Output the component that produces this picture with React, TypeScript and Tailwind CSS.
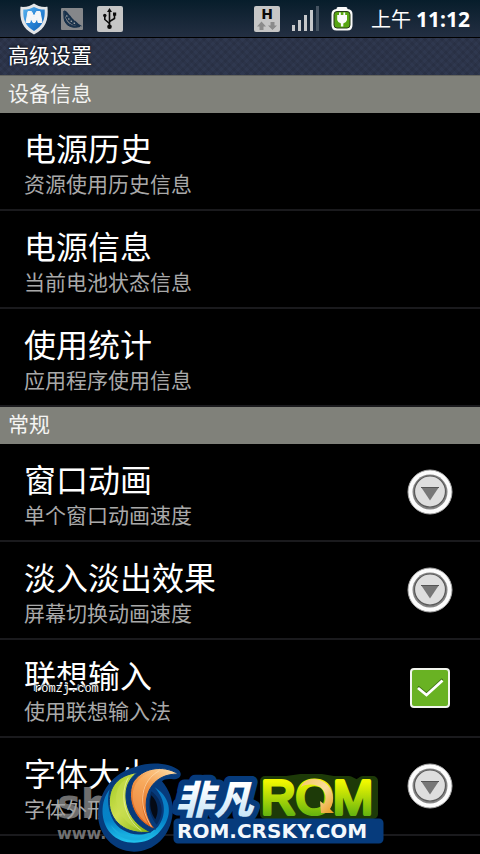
import { useState } from 'react'

interface Item {
    id: string
    title: string
    summary: string
    control?: 'dialog' | 'checkbox'
}

const DEVICE_INFO: Item[] = [
    { id: 'power-history', title: '电源历史', summary: '资源使用历史信息' },
    { id: 'power-info', title: '电源信息', summary: '当前电池状态信息' },
    { id: 'usage', title: '使用统计', summary: '应用程序使用信息' },
]

const GENERAL: Item[] = [
    { id: 'window-animation', title: '窗口动画', summary: '单个窗口动画速度', control: 'dialog' },
    { id: 'fade', title: '淡入淡出效果', summary: '屏幕切换动画速度', control: 'dialog' },
    { id: 'predictive', title: '联想输入', summary: '使用联想输入法', control: 'checkbox' },
    { id: 'font-size', title: '字体大小', summary: '字体外形', control: 'dialog' },
]

function ShieldIcon() {
    return (
        <svg width="30" height="32" viewBox="0 0 30 32">
            <defs>
                <linearGradient id="shield-blue" x1="0" y1="0" x2="1" y2="1">
                    <stop offset="0" stopColor="#5bb4ee" />
                    <stop offset="0.5" stopColor="#2a86d8" />
                    <stop offset="1" stopColor="#1161b4" />
                </linearGradient>
            </defs>
            <path d="M15 0.5C18 2.8 23 4.4 28.5 3.8C29.6 17 27 25.5 15 31.5C3 25.5 0.4 17 1.5 3.8C7 4.4 12 2.8 15 0.5Z" fill="#e4e6e8" />
            <path d="M15 4C18 5.6 21.5 6.6 25.7 6.6C26.2 17 23.5 23.3 15 28C6.5 23.3 3.8 17 4.3 6.6C8.5 6.6 12 5.6 15 4Z" fill="url(#shield-blue)" />
            <path d="M7 19.5L9 8.5H12.5L15 13.5L17.5 8.5H21L23 19.5H19L18.3 15L16 19.5H14L11.7 15L11 19.5Z" fill="#f4f6f8" stroke="#f4f6f8" strokeLinejoin="round" />
        </svg>
    )
}

function PodIcon() {
    return (
        <svg width="22" height="22" viewBox="0 0 22 22">
            <rect width="22" height="22" rx="1" fill="#85878a" />
            <path d="M3 3C2.5 12 7 19 19 18.5C13 20.5 4 19 3 10Z" fill="#17304a" stroke="#17304a" />
            <path d="M4 3.5C6.5 4.5 7 7.5 9 8.5C9.5 10.5 12 11 12.5 13C15 13 15 15.5 18.5 17.5C11 17.5 4.5 12 4 3.5Z" fill="#233c54" stroke="#17304a" strokeWidth="1.5" />
            <g fill="#a9abac">
                <circle cx="5.8" cy="8" r="0.8" />
                <circle cx="7.8" cy="11" r="0.8" />
                <circle cx="10.3" cy="13.3" r="0.8" />
                <circle cx="13.3" cy="15.2" r="0.8" />
            </g>
        </svg>
    )
}

function UsbIcon() {
    return (
        <svg width="26" height="26" viewBox="0 0 26 26">
            <rect width="26" height="26" rx="2" fill="#c6c6c6" />
            <g fill="none" stroke="#0c0c0c" strokeWidth="1.6">
                <path d="M12.5 5V21" />
                <path d="M12.5 17.5L7.8 13.5V10" />
                <path d="M12.5 15.5L17.5 12.5V9" />
            </g>
            <path d="M12.5 2L15 6H10Z" fill="#0c0c0c" />
            <circle cx="12.5" cy="20.7" r="2.3" fill="#0c0c0c" />
            <circle cx="7.8" cy="9.5" r="1.7" fill="#0c0c0c" />
            <rect x="16" y="6.5" width="3.2" height="3.2" fill="#0c0c0c" />
        </svg>
    )
}

function NetworkIcon() {
    return (
        <svg width="26" height="26" viewBox="0 0 26 26" overflow="visible">
            <rect width="26" height="26" rx="2" fill="#c6c6c6" />
            <text x="13" y="13" textAnchor="middle" fill="#0a0a0a" className="font-['DejaVu_Sans',sans-serif] text-[14px] font-bold">H</text>
            <path d="M7.5 15.5L12 20.5H9.5V24H5.5V20.5H3Z" fill="#8b8b8b" />
            <path d="M18.5 24L14 19.5H16.5V16H20.5V19.5H23Z" fill="#8b8b8b" />
        </svg>
    )
}

function SignalIcon() {
    return (
        <svg width="27" height="26" viewBox="0 0 27 26">
            <g fill="#c6c8ca">
                <rect x="0" y="19" width="3" height="6" />
                <rect x="6" y="14" width="3" height="11" />
                <rect x="12" y="9" width="3" height="16" />
                <rect x="18" y="4" width="3" height="21" />
            </g>
            <rect x="24" y="0" width="3" height="25" fill="#465462" />
        </svg>
    )
}

function BatteryIcon() {
    return (
        <svg width="22" height="24" viewBox="0 0 22 24">
            <path d="M7 0H15Q16.5 0 16.5 2Q21.5 2.5 21.5 7V18Q21.5 23.5 16.5 23.5H5.5Q0.5 23.5 0.5 18V7Q0.5 2.5 5.5 2Q5.5 0 7 0Z" fill="#fafafa" />
            <rect x="3" y="4.5" width="16" height="16.5" rx="3" fill="#58a512" stroke="#263a18" />
            <path d="M8 5.5H9.8V8H12.4V5.5H14.2V8H16V13Q15.5 15.5 12.3 16.5V19.5H9.9V16.5Q6.7 15.5 6.2 13V8H8Z" fill="#fafafa" />
        </svg>
    )
}

function StatusBar() {
    return (
        <header className="flex h-[38px] items-center border-b border-black bg-linear-to-b from-[#071d2b] to-[#232f42] pr-[10px] pl-[19px] text-white">
            <div className="flex flex-1 items-center">
                <ShieldIcon />
                <div className="ml-3">
                    <PodIcon />
                </div>
                <div className="ml-[14px]">
                    <UsbIcon />
                </div>
            </div>
            <div className="flex items-center gap-3">
                <NetworkIcon />
                <SignalIcon />
                <BatteryIcon />
            </div>
            <div className="ml-[18px] flex items-baseline gap-[5px] leading-6">
                <span className="text-[20px]">上午</span>
                <time className="font-['Noto_Sans',sans-serif] text-[21px] font-bold">11:12</time>
            </div>
        </header>
    )
}

function SectionHeader({ label }: { label: string }) {
    return (
        <h2 className="flex h-[37px] items-center bg-[#80817a] pb-1 pl-2 text-[21px] text-[#f4f4f2]">{label}</h2>
    )
}

function DialogButton({ label }: { label: string }) {
    return (
        <button type="button" aria-label={label} className="size-[46px]">
            <svg width="46" height="46" viewBox="0 0 46 46">
                <circle cx="23" cy="23" r="22" fill="#fcfcfc" stroke="#aaaaaa" />
                <circle cx="23" cy="23" r="17.5" fill="#858585" />
                <circle cx="23" cy="22.5" r="15.5" fill="#dedede" stroke="#5a5a5a" strokeWidth="1.2" />
                <path d="M14 18H32L23 31.5Z" fill="#777777" />
                <path d="M14 18.5H32" stroke="#555555" />
            </svg>
        </button>
    )
}

function PreferenceRow({ item }: { item: Item }) {
    const [checked, setChecked] = useState(true)

    return (
        <li className="flex items-center justify-between border-b-2 border-[#1a1a1d] pr-[27px] pl-6">
            <label htmlFor={item.control === 'checkbox' ? item.id : undefined} className="block pt-[14px] pb-[10px]">
                <span className="block text-[32px] leading-10 text-white">{item.title}</span>
                <span className="block text-[21px] leading-8 text-[#a9a9a9]">{item.summary}</span>
            </label>
            {item.control === 'dialog' && <DialogButton label={item.title} />}
            {item.control === 'checkbox' && (
                <div className="relative mr-[3px] size-10">
                    <input
                        id={item.id}
                        type="checkbox"
                        checked={checked}
                        onChange={e => setChecked(e.target.checked)}
                        className="peer block size-10 appearance-none rounded border-2 border-[#f2f5ee] bg-[#333333] checked:bg-[#69b223]"
                    />
                    <svg viewBox="0 0 40 40" className="pointer-events-none absolute inset-0 hidden peer-checked:block">
                        <path d="M8 18.5L16.5 25.5L32.5 11" fill="none" stroke="#3b6e12" strokeWidth="2" />
                        <path d="M8 20L16.5 27L32.5 12.5" fill="none" stroke="#ffffff" strokeWidth="2.8" />
                    </svg>
                </div>
            )}
        </li>
    )
}

function Logo() {
    return (
        <svg width="291" height="100" viewBox="0 0 291 100">
            <defs>
                <linearGradient id="ring" x1="0" y1="0" x2="0" y2="1">
                    <stop offset="0" stopColor="#0a7cc4" />
                    <stop offset="0.6" stopColor="#0583c8" />
                    <stop offset="1" stopColor="#22c6ee" />
                </linearGradient>
                <linearGradient id="leaf" x1="0" y1="0" x2="1" y2="1">
                    <stop offset="0" stopColor="#9cc81e" />
                    <stop offset="0.45" stopColor="#cfe052" />
                    <stop offset="1" stopColor="#7fb211" />
                </linearGradient>
                <linearGradient id="flame" x1="0.8" y1="0" x2="0.3" y2="1">
                    <stop offset="0" stopColor="#ffd9a0" />
                    <stop offset="0.4" stopColor="#f2994a" />
                    <stop offset="1" stopColor="#dc5c16" />
                </linearGradient>
                <linearGradient id="ice" x1="0" y1="0" x2="0" y2="1">
                    <stop offset="0.3" stopColor="#ffffff" />
                    <stop offset="1" stopColor="#b8def6" />
                </linearGradient>
                <linearGradient id="lime" x1="0" y1="0" x2="0" y2="1">
                    <stop offset="0.2" stopColor="#f0f800" />
                    <stop offset="0.9" stopColor="#58ae10" />
                </linearGradient>
                <linearGradient id="gold" x1="0" y1="0" x2="1" y2="1">
                    <stop offset="0" stopColor="#f6c866" />
                    <stop offset="0.5" stopColor="#fbdd9c" />
                    <stop offset="1" stopColor="#e99a1c" />
                </linearGradient>
            </defs>

            {/* Lettering */}
            <g strokeLinejoin="round" paintOrder="stroke">
                <path d="M170 27H192L206 25H226L238 27H254L262 31L268 27H278V60H170Z" fill="#1d3a08" stroke="#1d3a08" strokeWidth="10" />
                <text x="80" y="60" fill="url(#ice)" stroke="#063b7c" strokeWidth="12" className="font-['Noto_Sans_CJK_SC',sans-serif] text-[39px] font-black italic">非凡</text>
                <text x="166" y="60" fill="url(#lime)" stroke="url(#lime)" strokeWidth="4" className="font-['Liberation_Sans',sans-serif] text-[48px]">ROM</text>
                <path d="M83 69H284V85H83Z" fill="#063b7c" stroke="#063b7c" strokeWidth="9" />
                <text x="82" y="84" fill="#f4f8fc" className="font-['DejaVu_Sans',sans-serif] text-[20px] font-bold">ROM.CRSKY.COM</text>
            </g>
            <path d="M206 33C209 24 221 23 229 28C238 34 241 46 235 55L239 59L226 59L225 47L229 50C233 43 229 34 223 32C217 30 211 30 206 33Z" fill="url(#gold)" />

            {/* Swirl */}
            <g transform="scale(0.3333) translate(-45 -12)">
                <path d="M168 50C215 32 275 42 296 60C310 74 299 88 280 88C262 86 252 88 246 94C270 122 280 155 278 190C272 260 222 305 162 305C98 303 56 255 54 195C56 126 98 68 168 50Z" fill="#063b7c" />
                <path d="M89 118C60 155 60 214 92 250C128 290 205 288 240 244C278 202 278 146 224 112C258 150 260 198 234 230C194 272 120 254 98 208C84 180 80 148 89 118Z" fill="url(#ring)" />
                <path d="M92 224C130 272 194 272 226 236C208 284 120 286 92 224Z" fill="#19aede" />
                <path d="M214 124C252 152 252 196 230 224C206 196 200 160 214 124Z" fill="#052a5c" />
                <path d="M214 136C234 154 238 186 226 208C212 190 206 162 214 136Z" fill="#050a14" />
                <path d="M171 68C112 76 88 112 88 156C88 212 136 256 212 246C166 226 142 190 138 146C136 112 146 88 171 68Z" fill="url(#leaf)" stroke="#063b7c" strokeWidth="3" />
                <path d="M145 83C112 128 126 204 184 242C136 224 108 184 108 142C110 112 122 96 145 83Z" fill="#c6dd4e" opacity="0.6" />
                <path d="M145 83C118 130 130 204 184 242" fill="none" stroke="#edf5b5" strokeWidth="2" />
                <path d="M295 72C248 42 184 54 158 99C138 148 164 218 226 238C198 206 190 158 208 120C226 86 256 72 295 72Z" fill="url(#flame)" stroke="#063b7c" strokeWidth="3" />
                <path d="M238 62C186 88 168 150 204 222C154 186 142 118 182 84C200 68 218 63 238 62Z" fill="#ffc078" opacity="0.4" />
                <path d="M238 62C184 92 170 158 214 230" fill="none" stroke="#ffe1b8" strokeWidth="2" />
            </g>
        </svg>
    )
}

export default function App() {
    return (
        <div className="relative min-h-screen overflow-hidden bg-black font-['Noto_Sans_CJK_SC',sans-serif]">
            <StatusBar />

            <h1 className="flex h-[37px] items-center bg-[#2f384f] bg-[repeating-linear-gradient(45deg,#00000012_0px,#00000012_3px,transparent_3px,transparent_6px),repeating-linear-gradient(135deg,#00000012_0px,#00000012_3px,transparent_3px,transparent_6px)] pb-1 pl-2 text-[21px] text-white text-shadow-[0_-1px_3px_black]">
                高级设置
            </h1>

            <main className="border-t border-[#64655f]">
                <SectionHeader label="设备信息" />
                <ul>
                    {DEVICE_INFO.map(item => (
                        <PreferenceRow key={item.id} item={item} />
                    ))}
                </ul>

                <SectionHeader label="常规" />
                <ul>
                    {GENERAL.map(item => (
                        <PreferenceRow key={item.id} item={item} />
                    ))}
                </ul>
            </main>

            {/* Watermarks */}
            <span className="pointer-events-none absolute bottom-[157px] left-[34px] font-['Liberation_Mono',monospace] text-[12px] leading-4 text-white text-shadow-[0_0_1px_black,0_0_1px_black,0_0_2px_black,0_0_2px_black]">
                romzj.com
            </span>
            <div className="pointer-events-none absolute bottom-2 left-[57px] font-['DejaVu_Sans',sans-serif] font-bold text-[#a0a0a0]/70">
                <p className="text-[40px] leading-9">sh</p>
                <p className="text-[16px] leading-6">www.</p>
            </div>
            <div className="pointer-events-none absolute bottom-0 left-[95px]">
                <Logo />
            </div>
        </div>
    )
}
